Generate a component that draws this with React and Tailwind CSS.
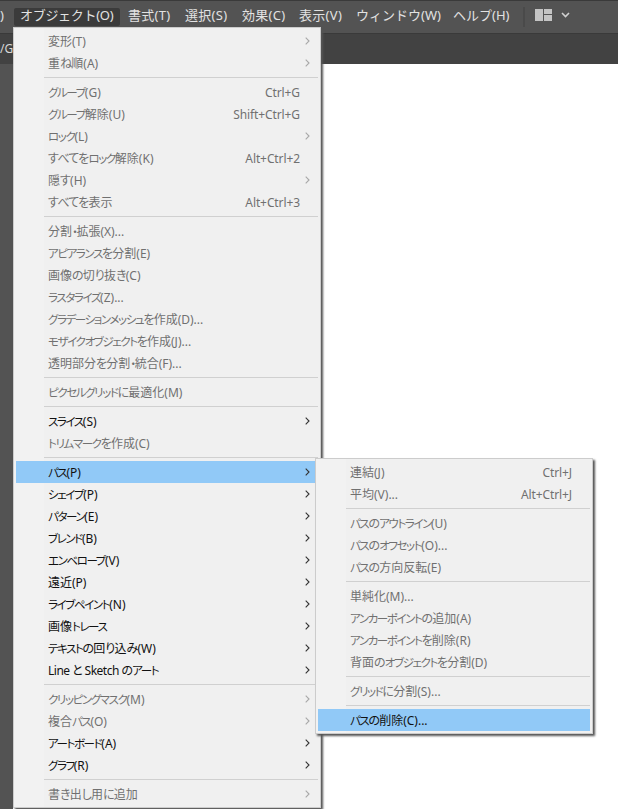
import React from 'react';

const FONT = "font-['Noto_Sans','Noto_Sans_CJK_JP',sans-serif]";

// menu data: sep marks a divider, on = enabled, sub = has a flyout arrow
const objectMenu = [
  { label: '変形(T)', sub: true },
  { label: '重ね順(A)', sub: true },
  { sep: true },
  { label: 'グループ(G)', key: 'Ctrl+G' },
  { label: 'グループ解除(U)', key: 'Shift+Ctrl+G' },
  { label: 'ロック(L)', sub: true },
  { label: 'すべてをロック解除(K)', key: 'Alt+Ctrl+2' },
  { label: '隠す(H)', sub: true },
  { label: 'すべてを表示', key: 'Alt+Ctrl+3' },
  { sep: true },
  { label: '分割・拡張(X)...' },
  { label: 'アピアランスを分割(E)' },
  { label: '画像の切り抜き(C)' },
  { label: 'ラスタライズ(Z)...' },
  { label: 'グラデーションメッシュを作成(D)...' },
  { label: 'モザイクオブジェクトを作成(J)...' },
  { label: '透明部分を分割・統合(F)...' },
  { sep: true },
  { label: 'ピクセルグリッドに最適化(M)' },
  { sep: true },
  { label: 'スライス(S)', sub: true, on: true },
  { label: 'トリムマークを作成(C)' },
  { sep: true },
  { label: 'パス(P)', sub: true, on: true, active: true },
  { label: 'シェイプ(P)', sub: true, on: true },
  { label: 'パターン(E)', sub: true, on: true },
  { label: 'ブレンド(B)', sub: true, on: true },
  { label: 'エンベロープ(V)', sub: true, on: true },
  { label: '遠近(P)', sub: true, on: true },
  { label: 'ライブペイント(N)', sub: true, on: true },
  { label: '画像トレース', sub: true, on: true },
  { label: 'テキストの回り込み(W)', sub: true, on: true },
  { label: 'Line と Sketch のアート', sub: true, on: true, tight: true },
  { sep: true },
  { label: 'クリッピングマスク(M)', sub: true },
  { label: '複合パス(O)', sub: true },
  { label: 'アートボード(A)', sub: true, on: true },
  { label: 'グラフ(R)', sub: true, on: true },
  { sep: true },
  { label: '書き出し用に追加', sub: true },
];

const pathMenu = [
  { label: '連結(J)', key: 'Ctrl+J' },
  { label: '平均(V)...', key: 'Alt+Ctrl+J' },
  { sep: true },
  { label: 'パスのアウトライン(U)' },
  { label: 'パスのオフセット(O)...' },
  { label: 'パスの方向反転(E)' },
  { sep: true },
  { label: '単純化(M)...' },
  { label: 'アンカーポイントの追加(A)' },
  { label: 'アンカーポイントを削除(R)' },
  { label: '背面のオブジェクトを分割(D)' },
  { sep: true },
  { label: 'グリッドに分割(S)...' },
  { sep: true },
  { label: 'パスの削除(C)...', on: true, active: true },
];

// the screenshot's UI font has condensed kana, so kana runs get squeezed
function Label({ text }) {
  return text.split(/([\u30A0-\u30FF]+|[\u3040-\u309F]+)/).map((part, i) => {
    if (/^[\u30A0-\u30FF]/.test(part)) {
      return <span key={i} className="text-[11.5px] tracking-[-1.4px]">{part}</span>;
    }
    if (/^[\u3040-\u309F]/.test(part)) {
      return <span key={i} className="tracking-[-0.8px]">{part}</span>;
    }
    return part;
  });
}

function MenuRows({ rows }) {
  return rows.map((row, i) => {
    if (row.sep) {
      return (
        <div key={i} className="h-[7px] flex items-center pl-[28px]">
          <div className="h-px w-full bg-[#d0d0d0]" />
        </div>
      );
    }
    return (
      <div
        key={i}
        className={`h-[22px] flex items-center pl-[32px] text-[12px] whitespace-nowrap [font-feature-settings:'palt'] ${row.active ? 'bg-[#91c9f7]' : ''} ${row.on ? 'text-[#111111]' : 'text-[#707070]'}`}
      >
        <span className={`flex-1 pt-px ${row.tight ? 'tracking-[-0.5px]' : ''}`}><Label text={row.label} /></span>
        {row.key && <span className="pt-px tracking-[-0.1px]">{row.key}</span>}
        <span className="w-[18px] h-full flex items-center pl-[5px]">
          {row.sub && (
            <svg width="5" height="8" viewBox="0 0 5 8" fill="none">
              <path d="M.7.7L4 4 .7 7.3" stroke={row.on ? '#333333' : '#a8a8a8'} strokeWidth="1.1" />
            </svg>
          )}
        </span>
      </div>
    );
  });
}

export default function App() {
  return (
    <div className={`relative w-[618px] h-[809px] overflow-hidden bg-white ${FONT}`}>
      {/* app menu bar */}
      <div className="h-[34px] flex items-center bg-[#535353] border-t border-b border-t-[#3a3a3a] border-b-[#3a3a3a] text-[13px] text-[#e2e2e2] whitespace-nowrap">
        <span className="w-[14px] pb-[2px]">)</span>
        <span className="h-[18px] w-[106px] flex items-center pl-[6px] pb-[2px] bg-[#3b3b3b] rounded-[2px] tracking-[-0.3px]">オブジェクト(O)</span>
        <span className="w-[57px] pl-[8px] pb-[2px] tracking-[0.3px]">書式(T)</span>
        <span className="w-[57px] pl-[8px] pb-[2px] tracking-[0.3px]">選択(S)</span>
        <span className="w-[57px] pl-[8px] pb-[2px] tracking-[0.3px]">効果(C)</span>
        <span className="w-[57px] pl-[8px] pb-[2px] tracking-[0.3px]">表示(V)</span>
        <span className="w-[97px] pl-[8px] pb-[2px]">ウィンドウ(W)</span>
        <span className="w-[78px] pl-[8px] pb-[2px]">ヘルプ(H)</span>
        <div className="w-[2px] h-[20px] bg-[#4a4a4a]" />
        <svg className="ml-[10px] mb-[4px]" width="17" height="12" viewBox="0 0 17 12" fill="#c4c4c4">
          <rect x="0" y="0" width="8" height="12" />
          <rect x="9" y="0" width="8" height="5" />
          <rect x="9" y="6" width="8" height="6" />
        </svg>
        <svg className="ml-[9px] mb-[4px]" width="9" height="6" viewBox="0 0 9 6" fill="none">
          <path d="M1 1l3.5 3.5L8 1" stroke="#d0d0d0" strokeWidth="1.6" />
        </svg>
      </div>

      {/* document tab strip */}
      <div className="h-[30px] flex items-center bg-[#424242] text-[12px] text-[#d8d8d8]">/G</div>

      {/* pasteboard + artboard */}
      <div className="h-[745px] flex">
        <div className="w-[13px] bg-[#535353]" />
        <div className="flex-1 bg-white" />
      </div>

      {/* Object menu */}
      <div className="absolute left-[13px] top-[27px] w-[308px] h-[781px] px-[2px] py-[2px] bg-[linear-gradient(90deg,#f2f2f2_30px,#f0f0f0_30px)] border border-[#cccccc] shadow-[2px_2px_2px_#555555]">
        <MenuRows rows={objectMenu} />

        {/* Path flyout */}
        <div className="absolute left-[301px] top-[430px] w-[278px] h-[276px] px-[2px] py-[2px] bg-[linear-gradient(90deg,#f2f2f2_30px,#f0f0f0_30px)] border border-[#cccccc] shadow-[2px_2px_2px_#555555]">
          <MenuRows rows={pathMenu} />
        </div>
      </div>
    </div>
  );
}
